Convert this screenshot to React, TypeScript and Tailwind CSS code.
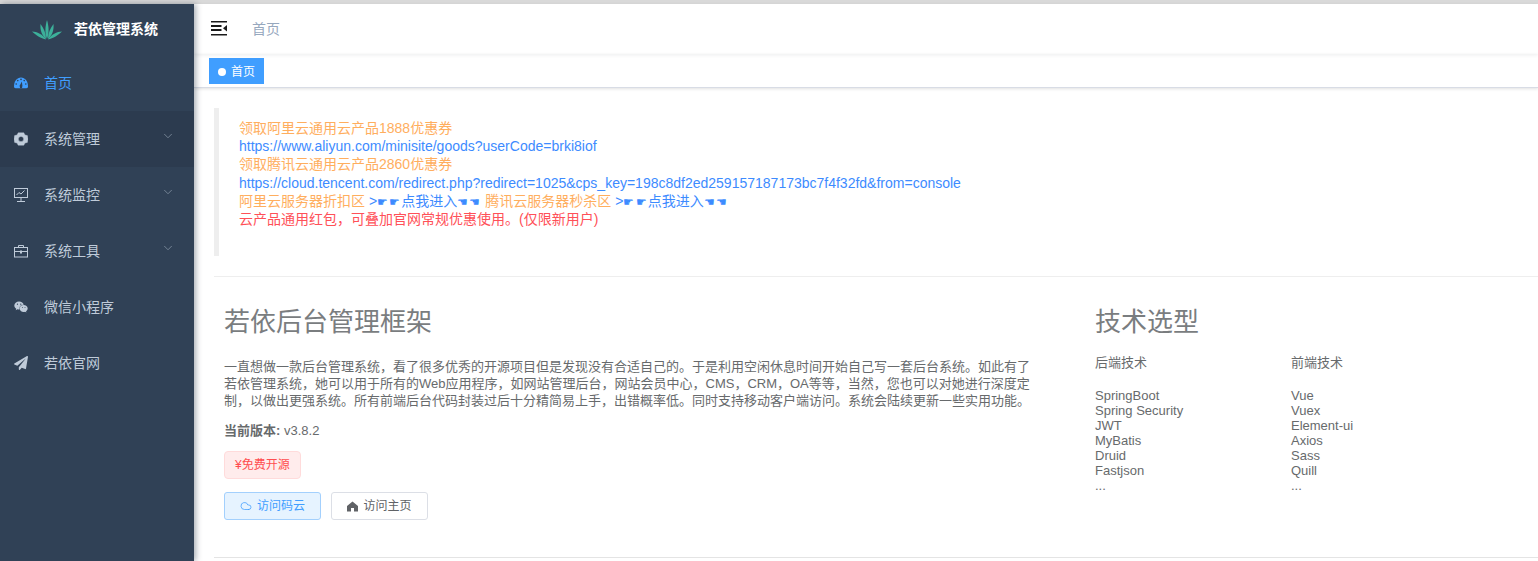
import { FaPaperPlane, FaWeixin } from "react-icons/fa";
import { ChevronDown, Cloud } from "lucide-react";
import { ReactNode } from "react";

const Logo = () => (
  <svg width="30" height="20" viewBox="0 0 30 20" fill="#3cb09a">
    <path d="M15 19 C12.6 13 13.2 6 15 0 C16.8 6 17.4 13 15 19Z" />
    <path d="M14 19 C9.5 15 8 10 8.5 4 C11.6 8 14 13 14 19Z" />
    <path d="M16 19 C20.5 15 22 10 21.5 4 C18.4 8 16 13 16 19Z" />
    <path d="M14 19.5 C9 18.5 3.5 15 0 11.5 C5 11.5 11 14.5 14 19.5Z" />
    <path d="M16 19.5 C21 18.5 26.5 15 30 11.5 C25 11.5 19 14.5 16 19.5Z" />
  </svg>
);

const Hamburger = () => (
  <svg width="16" height="15" viewBox="0 0 16 15" fill="#1a1a1a">
    <rect x="0" y="0" width="16" height="1.5" />
    <rect x="0" y="4" width="10.5" height="2" />
    <rect x="0" y="8" width="10.5" height="2" />
    <rect x="0" y="13" width="16" height="1.5" />
    <path d="M16 4 V10.5 L12 7.2Z" />
  </svg>
);

const GaugeIcon = () => (
  <svg width="14" height="12" viewBox="0 0 14 12">
    <path fill="currentColor" d="M0 9.5 C0 4.2 3 0.5 7 0.5 C11 0.5 14 4.2 14 9.5 C14 10.6 13.4 11.2 12.4 11.2 H1.6 C0.6 11.2 0 10.6 0 9.5Z" />
    <g fill="#304156">
      <circle cx="7" cy="2.4" r="0.8" />
      <circle cx="3.8" cy="3.6" r="0.8" />
      <circle cx="10.2" cy="3.6" r="0.8" />
      <circle cx="2.2" cy="7" r="0.8" />
      <circle cx="11.8" cy="7" r="0.8" />
      <path d="M6.1 11.2 L5.6 8.8 L7.9 4.6 L8.4 8.8 L8 11.2Z" />
    </g>
  </svg>
);

const GearIcon = () => (
  <svg width="14" height="14" viewBox="0 0 14 14" fill="currentColor">
    <path
      fillRule="evenodd"
      d="M4.2 0.8 H9.8 L11 3 L13.4 3.6 L14 7 L13.4 10.4 L11 11 L9.8 13.2 H4.2 L3 11 L0.6 10.4 L0 7 L0.6 3.6 L3 3 Z M7 4.4 A2.6 2.6 0 1 0 7 9.6 A2.6 2.6 0 1 0 7 4.4 Z"
      strokeLinejoin="round"
      stroke="currentColor"
      strokeWidth="0.4"
    />
  </svg>
);

const MonitorIcon = () => (
  <svg width="14" height="14" viewBox="0 0 14 14" fill="none" stroke="currentColor" strokeWidth="1">
    <rect x="0.5" y="0.5" width="13" height="9" />
    <path d="M2.5 7 L5 4.5 L7 6 L10.5 2.5" />
    <path d="M7 10 V13 M3 13.5 H11" />
  </svg>
);

const ToolIcon = () => (
  <svg width="14" height="14" viewBox="0 0 14 14" fill="none" stroke="currentColor" strokeWidth="1">
    <rect x="0.5" y="3.5" width="13" height="9.5" />
    <path d="M4.5 3.5 V1.5 H9.5 V3.5" />
    <path d="M0.5 7.5 H13.5" />
    <path d="M7 6.5 V9.5" strokeWidth="2" />
  </svg>
);

const HomeIcon = () => (
  <svg width="11" height="11" viewBox="0 0 11 11" fill="currentColor">
    <path d="M5.5 0.5 L11 5 V10.5 H7 V7 H4 V10.5 H0 V5 Z" />
  </svg>
);

const menus: { label: string; icon: ReactNode; arrow?: boolean; active?: boolean; open?: boolean }[] = [
  { label: "首页", icon: <GaugeIcon />, active: true },
  { label: "系统管理", icon: <GearIcon />, arrow: true, open: true },
  { label: "系统监控", icon: <MonitorIcon />, arrow: true },
  { label: "系统工具", icon: <ToolIcon />, arrow: true },
  { label: "微信小程序", icon: <FaWeixin size={14} /> },
  { label: "若依官网", icon: <FaPaperPlane size={14} /> },
];

const backend = ["SpringBoot", "Spring Security", "JWT", "MyBatis", "Druid", "Fastjson", "..."];
const frontend = ["Vue", "Vuex", "Element-ui", "Axios", "Sass", "Quill", "..."];

const Sidebar = () => (
  <aside className="w-[194px] shrink-0 bg-[#304156] shadow-[2px_0_6px_rgba(0,21,41,0.35)] z-10">
    <div className="h-[51px] flex items-center pl-[32px] gap-[12px]">
      <Logo />
      <span className="text-white text-[14px] font-bold">若依管理系统</span>
    </div>
    {menus.map((m) => (
      <div
        key={m.label}
        className={`h-[56px] flex items-center pl-[14px] pr-[19px] text-[14px] ${
          m.active ? "text-[#409eff]" : "text-[#bfcbd9]"
        } ${m.open ? "bg-[#2c3b4f]" : ""}`}
      >
        <span className="w-[30px] flex">{m.icon}</span>
        <span className="flex-1">{m.label}</span>
        {m.arrow && <ChevronDown size={14} strokeWidth={1.2} className="text-[#8f9dad] -mt-[6px]" />}
      </div>
    ))}
  </aside>
);

const HandLink = () => (
  <span className="text-[#3d8bff]">
    &gt;<span className="text-[12px] tracking-[1.1px]">☛☛</span>点我进入<span className="text-[12px] tracking-[1.1px]">☚☚</span>
  </span>
);

const Promo = () => (
  <blockquote className="ml-[20px] border-l-[5px] border-[#eeeeee] h-[148px] pl-[20px] pt-[11px] text-[14px] leading-[18.2px]">
    <div className="text-[#ffae5e]">领取阿里云通用云产品1888优惠券</div>
    <div className="text-[#3d8bff]">https://www.aliyun.com/minisite/goods?userCode=brki8iof</div>
    <div className="text-[#ffae5e]">领取腾讯云通用云产品2860优惠券</div>
    <div className="text-[#3d8bff]">
      https://cloud.tencent.com/redirect.php?redirect=1025&amp;cps_key=198c8df2ed259157187173bc7f4f32fd&amp;from=console
    </div>
    <div className="text-[#ffae5e] h-[18.2px] whitespace-nowrap">
      阿里云服务器折扣区 <HandLink /> 腾讯云服务器秒杀区 <HandLink />
    </div>
    <div className="text-[#ff5058]">云产品通用红包，可叠加官网常规优惠使用。(仅限新用户)</div>
  </blockquote>
);

const Intro = () => (
  <div className="w-[810px] ml-[30px]">
    <h2 className="text-[26px] leading-[30px] text-[#7a7d7f] font-normal">若依后台管理框架</h2>
    <p className="mt-[21px] text-[13px] leading-[17px] text-[#676a6c]">
      一直想做一款后台管理系统，看了很多优秀的开源项目但是发现没有合适自己的。于是利用空闲休息时间开始自己写一套后台系统。如此有了若依管理系统，她可以用于所有的Web应用程序，如网站管理后台，网站会员中心，CMS，CRM，OA等等，当然，您也可以对她进行深度定制，以做出更强系统。所有前端后台代码封装过后十分精简易上手，出错概率低。同时支持移动客户端访问。系统会陆续更新一些实用功能。
    </p>
    <p className="mt-[13px] text-[13px] leading-[17px] text-[#676a6c]">
      <b>当前版本:</b> <span>v3.8.2</span>
    </p>
    <div className="mt-[12px] flex">
      <span className="h-[28px] px-[10px] flex items-center rounded-[4px] border border-[#ffdbdb] bg-[#ffecec] text-[12px] text-[#ff4d4f]">
        ¥免费开源
      </span>
    </div>
    <div className="mt-[13px] flex gap-[10px]">
      <button className="w-[97px] h-[28px] flex items-center justify-center gap-[5px] rounded-[3px] border border-[#a3d0fd] bg-[#e6f3ff] text-[12px] text-[#409eff]">
        <Cloud size={12} strokeWidth={1.5} />
        访问码云
      </button>
      <button className="w-[97px] h-[28px] flex items-center justify-center gap-[5px] rounded-[3px] border border-[#dcdfe6] bg-white text-[12px] text-[#606266]">
        <HomeIcon />
        访问主页
      </button>
    </div>
  </div>
);

const TechList = ({ title, items }: { title: string; items: string[] }) => (
  <div className="w-[196px]">
    <h4 className="text-[13px] leading-[15px] text-[#676a6c] font-normal">{title}</h4>
    <ul className="mt-[18px] text-[13px] leading-[15px] text-[#676a6c]">
      {items.map((t) => (
        <li key={t}>{t}</li>
      ))}
    </ul>
  </div>
);

const Tech = () => (
  <div className="ml-[61px]">
    <h2 className="text-[26px] leading-[30px] text-[#7a7d7f] font-normal">技术选型</h2>
    <div className="mt-[18px] flex">
      <TechList title="后端技术" items={backend} />
      <TechList title="前端技术" items={frontend} />
    </div>
  </div>
);

export default function App() {
  return (
    <div className="h-[561px] overflow-hidden bg-white font-['Liberation_Sans','Noto_Sans_CJK_SC',sans-serif]">
      <div className="h-[4px] bg-[#d9d9d9]" />
      <div className="flex h-[557px]">
        <Sidebar />
        <main className="flex-1 min-w-0">
          <div className="h-[50px] flex items-center pl-[17px] shadow-[0_1px_4px_rgba(0,21,41,0.08)]">
            <span className="flex -mt-[1px]">
              <Hamburger />
            </span>
            <span className="ml-[25px] text-[14px] text-[#97a8be]">首页</span>
          </div>
          <div className="h-[34px] flex items-center pl-[15px] border-b border-[#d8dce5] shadow-[0_1px_3px_rgba(0,0,0,0.12)]">
            <span className="h-[26px] w-[55px] flex items-center justify-center gap-[5px] pt-[2px] bg-[#409eff] text-white text-[12px]">
              <i className="w-[8px] h-[8px] rounded-full bg-white" />
              首页
            </span>
          </div>
          <div className="pt-[20px]">
            <Promo />
            <hr className="mt-[20px] ml-[20px] border-[#eeeeee]" />
            <div className="mt-[30px] h-[250px] flex">
              <Intro />
              <Tech />
            </div>
            <hr className="ml-[20px] border-[#e4e4e4]" />
          </div>
        </main>
      </div>
    </div>
  );
}
